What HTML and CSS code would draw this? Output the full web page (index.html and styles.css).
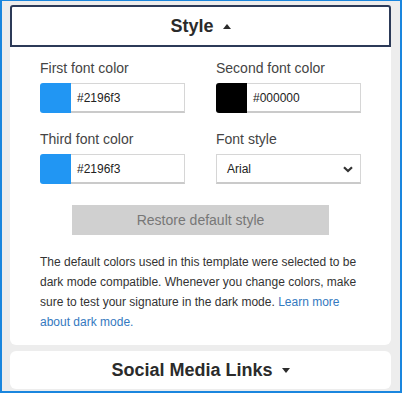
FILE: index.html
```html
<!DOCTYPE html>
<html>
<head>
<meta charset="utf-8">
<link rel="stylesheet" href="styles.css">
</head>
<body>
<div class="frame">
  <section class="card">
    <div class="card-head open">
      <span class="title">Style</span><span class="caret up"></span>
    </div>
    <div class="card-body">
      <div class="grid">
        <div class="field">
          <div class="label">First font color</div>
          <div class="color-input">
            <div class="swatch blue"></div>
            <div class="hex">#2196f3</div>
          </div>
        </div>
        <div class="field">
          <div class="label">Second font color</div>
          <div class="color-input">
            <div class="swatch black"></div>
            <div class="hex">#000000</div>
          </div>
        </div>
        <div class="field">
          <div class="label">Third font color</div>
          <div class="color-input">
            <div class="swatch blue"></div>
            <div class="hex">#2196f3</div>
          </div>
        </div>
        <div class="field">
          <div class="label">Font style</div>
          <div class="select">
            <span>Arial</span>
            <svg class="chev" width="10" height="7" viewBox="0 0 10 7"><path d="M1 1.2 L5 5 L9 1.2" fill="none" stroke="#333" stroke-width="2.2"/></svg>
          </div>
        </div>
      </div>
      <div class="btn-row"><div class="btn">Restore default style</div></div>
      <p class="note">The default colors used in this template were selected to be dark mode compatible. Whenever you change colors, make sure to test your signature in the dark mode. <a href="#">Learn more about dark mode.</a></p>
    </div>
  </section>
  <section class="card closed">
    <div class="card-head">
      <span class="title">Social Media Links</span><span class="caret down"></span>
    </div>
  </section>
</div>
</body>
</html>
```
FILE: styles.css
```css
* { box-sizing: border-box; }
html, body { margin: 0; padding: 0; }
body { font-family: "Liberation Sans", Arial, sans-serif; background: #fff; }
.frame {
  width: 402px;
  height: 393px;
  border: 2px solid #1a86de;
  border-top-width: 1px;
  background: #ededed;
  padding: 4px 9px 2px 8px;
  display: flex;
  flex-direction: column;
  gap: 6px;
  overflow: hidden;
}
.card {
  background: #fff;
  border-radius: 6px;
}
.card-head {
  height: 42px;
  display: flex;
  align-items: center;
  justify-content: center;
  gap: 9px;
  color: #2b2b2b;
}
.card-head.open {
  border: 2px solid #2c3a58;
  border-radius: 3px 3px 0 0;
}
.card.closed .card-head { height: 38px; }
.title { font-size: 18px; font-weight: bold; }
.caret { width: 0; height: 0; border-left: 4px solid transparent; border-right: 4px solid transparent; }
.caret.up { border-bottom: 5px solid #2b2b2b; }
.caret.down { border-top: 5px solid #2b2b2b; }
.card-body { padding: 13px 30px 13px 30px; }
.grid {
  display: grid;
  grid-template-columns: 1fr 1fr;
  column-gap: 31px;
  row-gap: 18px;
}
.label { font-size: 14px; line-height: 16px; color: #444; margin-bottom: 7px; }
.color-input { display: flex; height: 30px; }
.swatch { width: 31px; height: 30px; border-radius: 3px 0 0 3px; flex: none; }
.swatch.blue { background: #2196f3; }
.swatch.black { background: #000; }
.hex {
  flex: 1;
  border: 1px solid #d6d6d6;
  border-left: none;
  border-bottom: 2px solid #cacaca;
  font-size: 12px;
  color: #222;
  padding-left: 6px;
  display: flex;
  align-items: center;
}
.select {
  position: relative;
  height: 30px;
  border: 1px solid #d6d6d6;
  border-bottom: 2px solid #cacaca;
  font-size: 12px;
  color: #222;
  padding-left: 10px;
  display: flex;
  align-items: center;
}
.chev { position: absolute; right: 7px; top: 11px; }
.btn-row { display: flex; justify-content: center; margin-top: 21px; }
.btn {
  width: 257px;
  height: 30px;
  background: #d0d0d0;
  color: #777;
  font-size: 14px;
  display: flex;
  align-items: center;
  justify-content: center;
}
.note {
  margin: 17px 0 0 0;
  font-size: 12px;
  line-height: 20px;
  color: #333;
}
.note a { color: #3479c0; text-decoration: none; }
```
